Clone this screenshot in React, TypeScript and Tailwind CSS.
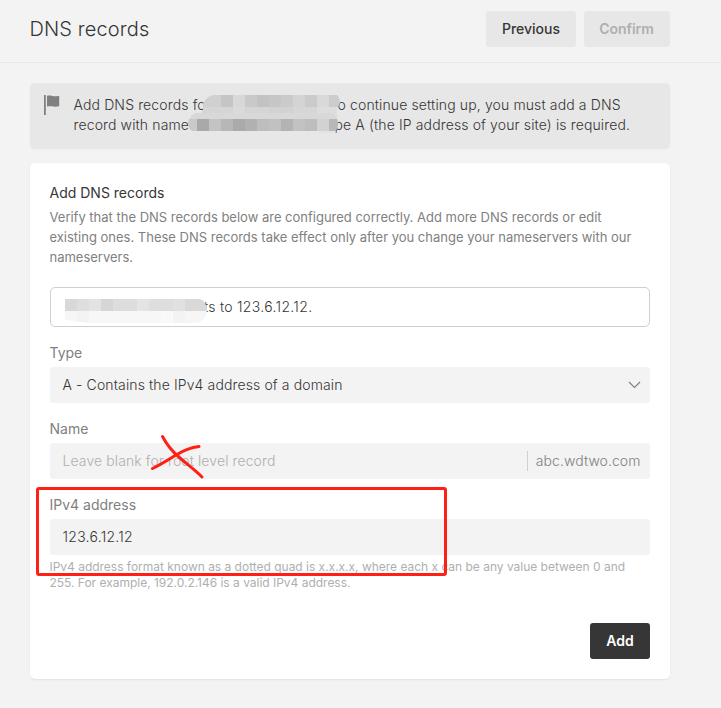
import type { ReactNode } from "react";

type Tile = [x: number, y: number, width: number, color: string];

const noticeTiles: Tile[] = [
  [197, 95, 24, "#d0d0d0"], [221, 95, 12, "#c5c5c5"], [233, 95, 12, "#d8d8d8"],
  [245, 95, 12, "#c9c9c9"], [257, 95, 12, "#c2c2c2"], [269, 95, 12, "#c6c6c6"],
  [281, 95, 12, "#cbcbcb"], [293, 95, 12, "#d4d4d4"], [305, 95, 12, "#cbcbcb"],
  [317, 95, 12, "#d9d9d9"], [329, 95, 12, "#cccccc"],
  [197, 107, 24, "#d5d5d5"], [221, 107, 12, "#d5d5d5"], [233, 107, 12, "#dadada"],
  [245, 107, 24, "#d5d5d5"], [269, 107, 24, "#d2d2d2"], [293, 107, 24, "#d6d6d6"],
  [317, 107, 24, "#dddddd"],
];

const nameTiles: Tile[] = [
  [185, 119, 12, "#c9c9c9"], [197, 119, 12, "#a9a9a9"], [209, 119, 12, "#c3c3c3"],
  [221, 119, 12, "#b7b7b7"], [233, 119, 12, "#aaaaaa"], [245, 119, 12, "#b1b1b1"],
  [257, 119, 12, "#bdbdbd"], [269, 119, 12, "#c1c1c1"], [281, 119, 12, "#b3b3b3"],
  [293, 119, 12, "#c2c2c2"], [305, 119, 12, "#bdbdbd"], [317, 119, 12, "#d2d2d2"],
  [329, 119, 12, "#b8b8b8"],
];

const recordTiles: Tile[] = [
  [65, 299, 12, "#d8d8d8"], [77, 299, 12, "#dedede"], [89, 299, 12, "#e3e3e3"],
  [101, 299, 12, "#d6d6d6"], [113, 299, 24, "#dddddd"], [137, 299, 12, "#e4e4e4"],
  [149, 299, 24, "#dedede"], [173, 299, 12, "#e1e1e1"], [185, 299, 24, "#d9d9d9"],
  [65, 311, 12, "#f6f6f6"], [77, 311, 12, "#f3f3f3"], [89, 311, 72, "#f7f7f7"],
  [161, 311, 12, "#f9f9f9"], [173, 311, 12, "#f3f3f3"], [185, 311, 24, "#f6f6f6"],
];

function Tiles({ tiles }: { tiles: Tile[] }) {
  return tiles.map(([x, y, width, color], i) => (
    <rect key={i} x={x} y={y} width={width} height="12" fill={color} shapeRendering="crispEdges" />
  ));
}

function Redactions() {
  return (
    <svg className="pointer-events-none absolute left-0 top-0" width="721" height="708" aria-hidden="true">
      <defs>
        <clipPath id="notice">
          <path d="M213 95H337Q340 98 340 103L337 109V119H200L194 117Q201 115 203 110V104Q206 97 213 95Z" />
        </clipPath>
        <clipPath id="name">
          <path d="M196 113H332Q338 118 338 124Q338 129 335 131H192Q188 128 188 123Q189 116 196 113Z" />
        </clipPath>
        <clipPath id="record">
          <path d="M65 299H200Q207 302 207 310Q205 323 195 323H89L65 320Z" />
        </clipPath>
      </defs>
      <g clipPath="url(#notice)"><Tiles tiles={noticeTiles} /></g>
      <path d="M196 113H332Q338 118 338 121H189Q190 115 196 113Z" fill="#d8d8d8" />
      <path d="M317 131H337Q331 135 323 133Z" fill="#e3e3e3" />
      <g clipPath="url(#name)"><Tiles tiles={nameTiles} /></g>
      <g clipPath="url(#record)"><Tiles tiles={recordTiles} /></g>
    </svg>
  );
}

function Annotations() {
  return (
    <svg className="pointer-events-none absolute left-0 top-0" width="721" height="708" fill="none" stroke="#ff2015" strokeWidth="3" strokeLinecap="round" strokeLinejoin="round" aria-hidden="true">
      <rect x="37.5" y="488.5" width="408" height="86" rx="1.5" />
      <path d="M162.5 436.5C168 447 174 453 180 458C188 465 195 470 202 477" />
      <path d="M152.5 468.5C160 465 168 460 176 455C184 450 191 447.500 199 446.500" />
    </svg>
  );
}

function Field({ label, children }: { label: string; children: ReactNode }) {
  return (
    <div className="mt-4 flex flex-col gap-1">
      <div className="-ml-[0.5px] h-5 text-sm leading-5 text-[#808080]">{label}</div>
      <div className="flex h-9 items-center rounded-[3px] bg-[#f3f3f3] px-[12.5px] text-sm font-[350] text-[#363636]">
        {children}
      </div>
    </div>
  );
}

export default function App() {
  return (
    <div className="relative h-[708px] w-[721px] overflow-hidden bg-[#f3f3f3] font-['Inter',sans-serif] text-[#363636]">
      <header className="flex h-[63px] items-start border-b border-[#e7e7e7] pl-[29.5px] pr-[51px] pt-[11px]">
        <h1 className="flex-1 text-xl leading-9 font-light tracking-[0.12px]">DNS records</h1>
        <div className="flex gap-2 text-sm">
          <button className="h-9 w-[90px] rounded-[3px] bg-[#e7e7e7] font-medium">Previous</button>
          <button className="h-9 w-[86px] rounded-[3px] bg-[#e7e7e7] pr-px font-semibold tracking-[-0.05px] text-[#afafaf]">Confirm</button>
        </div>
      </header>

      <main className="flex w-[670px] flex-col gap-[15px] pl-[30px] pt-5">
        <section className="flex h-[65px] rounded-[5px] bg-[#e7e7e7] pl-[14px] pt-3 shadow-[0_1px_2px_#00000010]">
          <svg className="mr-[13.5px] shrink-0" width="16" height="20" viewBox="0 0 16 20" fill="#808080" aria-hidden="true">
            <path d="M0 0H1.800V20H0ZM3 .8C6-.5 9 1.700 15.200 1V11.300C9 12.500 7 10.500 3 11.600Z" />
          </svg>
          <div className="whitespace-nowrap text-sm leading-5 font-light tracking-[0.13px]">
            <div className="flex">
              <span className="w-[264px]">Add DNS records fo</span>
              <span>o continue setting up, you must add a DNS</span>
            </div>
            <div className="flex">
              <span className="w-[261px]">record with name</span>
              <span>pe A (the IP address of your site) is required.</span>
            </div>
          </div>
        </section>

        <section className="flex h-[516px] flex-col rounded-[5px] bg-white p-5 shadow-[0_1px_2px_#00000014]">
          <h2 className="-ml-[0.5px] text-sm leading-5">Add DNS records</h2>
          <p className="-ml-[0.5px] mt-1 whitespace-nowrap text-[13px] leading-5 tracking-[-0.005px] text-[#808080]">
            Verify that the DNS records below are configured correctly. Add more DNS records or edit
            <br />
            existing ones. These DNS records take effect only after you change your nameservers with our
            <br />
            nameservers.
          </p>
          <div className="mt-5 flex h-10 items-center rounded-[5px] border border-[#cfcfcf] pl-[153px] text-sm font-light">
            <span className="whitespace-pre tracking-[0.25px]">ts to </span>
            <span className="tracking-[0.33px]">123.6.12.12.</span>
          </div>
          <Field label="Type">
            <span className="flex-1 tracking-[0.12px]">A - Contains the IPv4 address of a domain</span>
            <svg className="-mr-[3px]" width="13" height="8" viewBox="0 0 13 8" fill="none" stroke="#808080" strokeWidth="1.2" aria-hidden="true">
              <path d="M1 1L6.500 6.500L12 1" />
            </svg>
          </Field>
          <Field label="Name">
            <span className="flex-1 tracking-[0.1px] text-[#afafaf]">Leave blank for root level record</span>
            <span className="-mr-[3px] h-5 border-l border-[#cfcfcf] pl-2 leading-[19px] tracking-[0.06px] text-[#808080]">abc.wdtwo.com</span>
          </Field>
          <Field label="IPv4 address"><span className="tracking-[0.27px]">123.6.12.12</span></Field>
          <p className="-ml-[0.5px] mt-1 whitespace-nowrap text-xs leading-4 tracking-[-0.015px] text-[#afafaf]">
            IPv4 address format known as a dotted quad is x.x.x.x, where each x can be any value between 0 and
            <br />
            255. For example, 192.0.2.146 is a valid IPv4 address.
          </p>
          <button className="mt-8 h-9 w-[60px] self-end rounded-[3px] bg-[#363636] text-sm font-semibold text-white">Add</button>
        </section>
      </main>
      <Redactions />
      <Annotations />
    </div>
  );
}
